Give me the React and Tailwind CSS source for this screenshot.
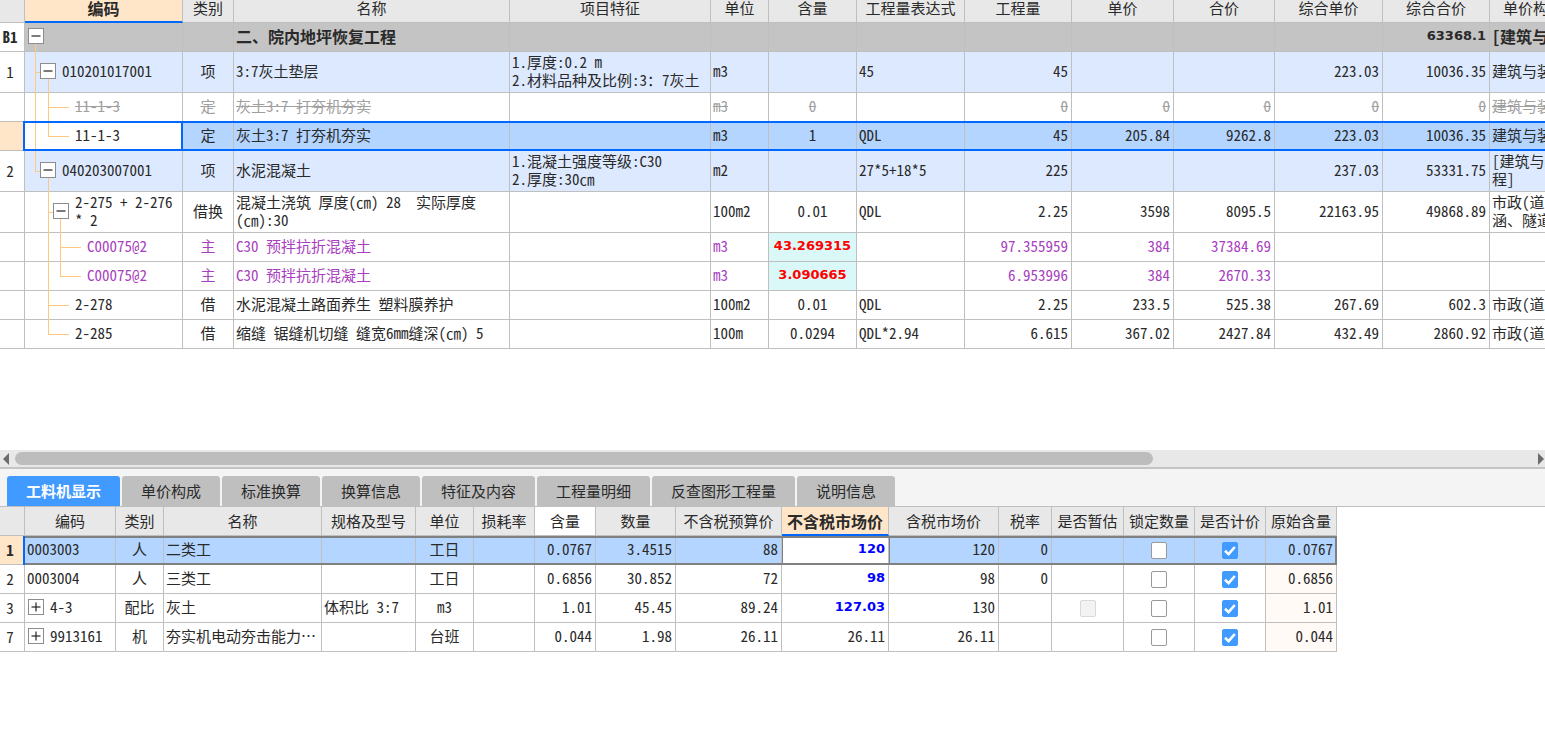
import React, { useState } from 'react';
import clsx from 'clsx';

const FONT =
  "font-['Noto_Sans_Mono_CJK_SC','Noto_Sans_CJK_SC',sans-serif] text-[15px] leading-[18px] text-[#2a2a2a]";

const BOLD_NUMBER = "font-['DejaVu_Sans','Noto_Sans_CJK_SC',sans-serif] text-[13px] font-bold";

const billColumns = [
  { key: 'type', label: '类别', width: 'w-[51px]', align: 'text-center' },
  { key: 'name', label: '名称', width: 'w-[276px]', align: 'text-left' },
  { key: 'feature', label: '项目特征', width: 'w-[201px]', align: 'text-left' },
  { key: 'unit', label: '单位', width: 'w-[58px]', align: 'text-left' },
  { key: 'content', label: '含量', width: 'w-[88px]', align: 'text-center' },
  { key: 'expr', label: '工程量表达式', width: 'w-[108px]', align: 'text-left' },
  { key: 'qty', label: '工程量', width: 'w-[107px]', align: 'text-right' },
  { key: 'price', label: '单价', width: 'w-[102px]', align: 'text-right' },
  { key: 'total', label: '合价', width: 'w-[101px]', align: 'text-right' },
  { key: 'unitAll', label: '综合单价', width: 'w-[108px]', align: 'text-right' },
  { key: 'totalAll', label: '综合合价', width: 'w-[107px]', align: 'text-right' },
  { key: 'file', label: '单价构成文件', width: 'w-[117px]', align: 'text-left' },
];

// guides: [level, 'full' | 'top' | 'bottom'], branch: [level, end x]
const billRows = [
  {
    no: 'B1', kind: 'section', depth: 0, open: true, code: '',
    guides: [[0, 'bottom']],
    name: '二、院内地坪恢复工程', totalAll: '63368.1', file: '[建筑与装饰工程]',
  },
  {
    no: '1', kind: 'item', depth: 1, open: true, code: '010201017001',
    guides: [[0, 'full'], [1, 'bottom']], branch: [0, 15],
    type: '项', name: '3:7灰土垫层', feature: '1.厚度:0.2 m\n2.材料品种及比例:3：7灰土', unit: 'm3',
    expr: '45', qty: '45', unitAll: '223.03', totalAll: '10036.35', file: '建筑与装饰工程',
  },
  {
    kind: 'deleted', depth: 2, code: '11-1-3',
    guides: [[0, 'full'], [1, 'full']], branch: [1, 44],
    type: '定', name: '灰土3:7 打夯机夯实', unit: 'm3', content: '0', qty: '0', price: '0', total: '0',
    unitAll: '0', totalAll: '0', file: '建筑与装饰工程',
  },
  {
    kind: 'selected', depth: 2, code: '11-1-3',
    guides: [[0, 'full'], [1, 'top']], branch: [1, 44],
    type: '定', name: '灰土3:7 打夯机夯实', unit: 'm3', content: '1', expr: 'QDL', qty: '45', price: '205.84',
    total: '9262.8', unitAll: '223.03', totalAll: '10036.35', file: '建筑与装饰工程',
  },
  {
    no: '2', kind: 'item', depth: 1, open: true, code: '040203007001',
    guides: [[0, 'top'], [1, 'bottom']], branch: [0, 15],
    type: '项', name: '水泥混凝土', feature: '1.混凝土强度等级:C30\n2.厚度:30㎝', unit: 'm2',
    expr: '27*5+18*5', qty: '225', unitAll: '237.03', totalAll: '53331.75', file: '[建筑与装饰工\n程]',
  },
  {
    kind: 'tall', depth: 2, open: true, code: '2-275 + 2-276 * 2',
    guides: [[1, 'full'], [2, 'bottom']], branch: [1, 28],
    type: '借换', name: '混凝土浇筑 厚度(㎝) 28  实际厚度\n(㎝):30', unit: '100m2', content: '0.01',
    expr: 'QDL', qty: '2.25', price: '3598', total: '8095.5', unitAll: '22163.95', totalAll: '49868.89',
    file: '市政(道路、桥\n涵、隧道)',
  },
  {
    kind: 'material', depth: 3, code: 'C00075@2',
    guides: [[1, 'full'], [2, 'full']], branch: [2, 56],
    type: '主', name: 'C30 预拌抗折混凝土', unit: 'm3', content: '43.269315', qty: '97.355959', price: '384',
    total: '37384.69',
  },
  {
    kind: 'material', depth: 3, code: 'C00075@2',
    guides: [[1, 'full'], [2, 'top']], branch: [2, 56],
    type: '主', name: 'C30 预拌抗折混凝土', unit: 'm3', content: '3.090665', qty: '6.953996', price: '384',
    total: '2670.33',
  },
  {
    kind: 'plain', depth: 2, code: '2-278',
    guides: [[1, 'full']], branch: [1, 44],
    type: '借', name: '水泥混凝土路面养生 塑料膜养护', unit: '100m2', content: '0.01', expr: 'QDL', qty: '2.25',
    price: '233.5', total: '525.38', unitAll: '267.69', totalAll: '602.3', file: '市政(道路、桥',
  },
  {
    kind: 'plain', depth: 2, code: '2-285',
    guides: [[1, 'top']], branch: [1, 44],
    type: '借', name: '缩缝 锯缝机切缝 缝宽6mm缝深(㎝) 5', unit: '100m', content: '0.0294', expr: 'QDL*2.94',
    qty: '6.615', price: '367.02', total: '2427.84', unitAll: '432.49', totalAll: '2860.92', file: '市政(道路、桥',
  },
];

const rowStyles = {
  section: 'h-[29px] bg-[#c4c4c4] font-bold',
  item: 'h-[41px] bg-[#dde9fe]',
  deleted: 'h-[29px] bg-white text-[#a0a0a0] line-through',
  selected: 'h-[29px] bg-[#b3d5ff]',
  tall: 'h-[41px] bg-white',
  material: 'h-[29px] bg-white text-[#a93fc0]',
  plain: 'h-[29px] bg-white',
};

const indents = ['pl-[3px]', 'pl-[15px]', 'pl-[28px]', 'pl-[40px]'];
const guideX = [10, 23, 35];

const tabs = ['工料机显示', '单价构成', '标准换算', '换算信息', '特征及内容', '工程量明细', '反查图形工程量', '说明信息'];

const resourceColumns = [
  { key: 'code', label: '编码', width: 'w-[91px]', align: 'text-left' },
  { key: 'type', label: '类别', width: 'w-[48px]', align: 'text-center' },
  { key: 'name', label: '名称', width: 'w-[158px]', align: 'text-left' },
  { key: 'spec', label: '规格及型号', width: 'w-[94px]', align: 'text-left' },
  { key: 'unit', label: '单位', width: 'w-[58px]', align: 'text-center' },
  { key: 'loss', label: '损耗率', width: 'w-[61px]', align: 'text-right' },
  { key: 'content', label: '含量', width: 'w-[61px]', align: 'text-right' },
  { key: 'qty', label: '数量', width: 'w-[80px]', align: 'text-right' },
  { key: 'budget', label: '不含税预算价', width: 'w-[106px]', align: 'text-right' },
  { key: 'market', label: '不含税市场价', width: 'w-[107px]', align: 'text-right' },
  { key: 'taxed', label: '含税市场价', width: 'w-[110px]', align: 'text-right' },
  { key: 'rate', label: '税率', width: 'w-[53px]', align: 'text-right' },
  { key: 'estimated', label: '是否暂估', width: 'w-[72px]', align: 'text-center' },
  { key: 'locked', label: '锁定数量', width: 'w-[71px]', align: 'text-center' },
  { key: 'priced', label: '是否计价', width: 'w-[71px]', align: 'text-center' },
  { key: 'origin', label: '原始含量', width: 'w-[71px]', align: 'text-right' },
];

const resourceRows = [
  { no: '1', code: '0003003', type: '人', name: '二类工', unit: '工日', content: '0.0767', qty: '3.4515', budget: '88', market: '120', changed: true, taxed: '120', rate: '0', locked: false, priced: true, origin: '0.0767' },
  { no: '2', code: '0003004', type: '人', name: '三类工', unit: '工日', content: '0.6856', qty: '30.852', budget: '72', market: '98', changed: true, taxed: '98', rate: '0', locked: false, priced: true, origin: '0.6856' },
  { no: '3', code: '4-3', group: true, type: '配比', name: '灰土', spec: '体积比 3:7', unit: 'm3', content: '1.01', qty: '45.45', budget: '89.24', market: '127.03', changed: true, taxed: '130', estimated: false, locked: false, priced: true, origin: '1.01' },
  { no: '7', code: '9913161', group: true, type: '机', name: '夯实机电动夯击能力…', unit: '台班', content: '0.044', qty: '1.98', budget: '26.11', market: '26.11', taxed: '26.11', locked: false, priced: true, origin: '0.044' },
];

const ToggleBox = ({ open, onClick }) => (
  <button
    onClick={onClick}
    aria-label={open ? '收起' : '展开'}
    className="relative flex h-4 w-4 shrink-0 items-center justify-center border border-[#8c8c8c] bg-white text-[#222]"
  >
    <svg className="h-[10px] w-[10px]" viewBox="0 0 10 10" stroke="currentColor" strokeWidth="1.2">
      <path d="M0.5 5h9" />
      {!open && <path d="M5 0.5v9" />}
    </svg>
  </button>
);

const TreeGuides = ({ guides, branch }) => (
  <svg className="absolute left-0 top-0 h-[calc(100%+1px)] w-full" stroke="#ffc880" strokeWidth="1">
    {guides.map(([level, span]) => (
      <line
        key={level}
        x1={guideX[level] + 0.5}
        x2={guideX[level] + 0.5}
        y1={span === 'bottom' ? '50%' : '0'}
        y2={span === 'top' ? '50%' : '100%'}
      />
    ))}
    {branch && <line x1={guideX[branch[0]]} x2={branch[1]} y1="50%" y2="50%" />}
  </svg>
);

const Check = ({ label, value, disabled }) => {
  const [checked, setChecked] = useState(value);
  return (
    <label className="relative inline-block h-[17px] w-4 align-middle">
      <input
        type="checkbox"
        aria-label={label}
        checked={checked}
        disabled={disabled}
        onChange={() => setChecked(!checked)}
        className="block h-[17px] w-4 appearance-none rounded-[2px] border border-[#999] bg-white checked:border-[#409aff] checked:bg-[#409aff] disabled:border-[#d9d9d9] disabled:bg-[#f3f3f3]"
      />
      {checked && (
        <svg className="pointer-events-none absolute inset-0 h-[17px] w-4" viewBox="0 0 16 17" fill="none" stroke="white" strokeWidth="2.6">
          <path d="M3 8.8L6.6 12.2L12.8 5" />
        </svg>
      )}
    </label>
  );
};

const BillTable = () => (
  <table className="w-[1607px] table-fixed border-separate border-spacing-0 whitespace-pre-wrap">
    <thead>
      <tr className="h-[23px] bg-[#e8e8e8] align-top leading-4">
        <th className="w-[25px] border-b border-r border-[#bfbfbf]" />
        <th className="w-[158px] border-b-2 border-r border-b-[#0067ff] border-r-[#bfbfbf] bg-[#ffe6c8] text-base font-bold leading-4">
          编码
        </th>
        {billColumns.map((col) => (
          <th key={col.key} className={clsx('border-b border-r border-[#bfbfbf] font-normal', col.width)}>
            {col.label}
          </th>
        ))}
      </tr>
    </thead>
    <tbody>
      {billRows.map((row, i) => {
        const selected = row.kind === 'selected';
        return (
          <tr key={i} className={clsx('relative', rowStyles[row.kind])}>
            <td
              className={clsx(
                'border-b border-r border-[#bfbfbf] pr-1 text-center text-[#2a2a2a]',
                selected ? 'bg-[#ffe6c8]' : 'bg-white'
              )}
            >
              {row.no}
              {selected && (
                <span className="pointer-events-none absolute -top-px bottom-0 left-[23px] right-0 z-10 border-2 border-[#0067ff]" />
              )}
            </td>
            <td className={clsx('relative border-b border-r border-[#bfbfbf] pb-[2px]', selected && 'bg-white', indents[row.depth])}>
              <TreeGuides guides={row.guides} branch={row.branch} />
              <div className="relative flex items-center">
                {row.open ? <ToggleBox open /> : <span className="w-4 shrink-0" />}
                <span className="ml-[6px]">{row.code}</span>
              </div>
              {selected && (
                <span className="pointer-events-none absolute -right-px bottom-0 top-0 border-r-2 border-[#0067ff]" />
              )}
            </td>
            {billColumns.map((col) => (
              <td
                key={col.key}
                className={clsx(
                  'border-b border-r border-[#bfbfbf] pb-[2px]',
                  col.align,
                  col.align === 'text-left' && 'pl-[2px]',
                  col.align === 'text-right' && 'pr-[3px]',
                  row.kind === 'section' && (col.key === 'totalAll' ? BOLD_NUMBER : 'whitespace-nowrap text-base leading-[18px]'),
                  row.kind === 'material' && col.key === 'content' && ['bg-[#dbf8f8] text-[#ff0000]', BOLD_NUMBER]
                )}
              >
                {row[col.key]}
              </td>
            ))}
          </tr>
        );
      })}
    </tbody>
  </table>
);

const ResourceTable = () => {
  const renderCell = (row, col) => {
    const value = row[col.key];
    if (typeof value === 'boolean') {
      return <Check label={col.label} value={value} disabled={col.key === 'estimated'} />;
    }
    if (col.key === 'code' && row.group) {
      return (
        <div className="flex items-center pl-px">
          <ToggleBox />
          <span className="ml-[6px]">{value}</span>
        </div>
      );
    }
    return value;
  };

  return (
    <table className="w-[1337px] table-fixed border-separate border-spacing-0 whitespace-nowrap">
      <thead>
        <tr className="h-[29px] bg-[#e8e8e8]">
          <th className="w-[25px] border-b border-r border-[#bfbfbf]" />
          {resourceColumns.map((col) => (
            <th
              key={col.key}
              className={clsx(
                'border-r border-r-[#bfbfbf]',
                col.width,
                col.key === 'market'
                  ? 'border-b-2 border-b-[#0067ff] bg-[#ffe6c8] text-base font-bold leading-[18px]'
                  : 'border-b border-b-[#bfbfbf] font-normal',
                col.key === 'content' && 'bg-white'
              )}
            >
              {col.label}
            </th>
          ))}
        </tr>
      </thead>
      <tbody>
        {resourceRows.map((row, i) => (
          <tr key={row.no} className={clsx('relative h-[29px]', i === 0 ? 'bg-[#b3d5ff]' : 'bg-white')}>
            <td
              className={clsx(
                'border-b border-r border-[#bfbfbf] pr-1 text-center',
                i === 0 ? 'bg-[#ffe6c8] font-bold' : 'bg-white'
              )}
            >
              {row.no}
              {i === 0 && (
                <>
                  <span className="pointer-events-none absolute bottom-0 left-[25px] right-0 top-0 z-10 border-y-2 border-r-2 border-[#808080]" />
                  <span className="pointer-events-none absolute bottom-0 left-[23px] top-0 z-10 border-r-2 border-[#0067ff]" />
                </>
              )}
            </td>
            {resourceColumns.map((col) => (
              <td
                key={col.key}
                className={clsx(
                  'border-b border-r border-[#bfbfbf] pb-[2px]',
                  col.align,
                  col.align === 'text-left' && 'pl-[2px]',
                  col.align === 'text-right' && 'pr-[3px]',
                  col.key === 'market' && row.changed && ['text-[#0000ff]', BOLD_NUMBER],
                  col.key === 'market' && i === 0 && 'bg-white shadow-[inset_1px_0_#808080,1px_0_#808080]',
                  col.key === 'origin' && i > 0 && 'bg-[#fffaf5]'
                )}
              >
                {renderCell(row, col)}
              </td>
            ))}
          </tr>
        ))}
      </tbody>
    </table>
  );
};

const ScrollBar = () => (
  <div className="flex h-[17px] items-center gap-[6px] bg-[#e8e8e8] pl-[3px] pr-px">
    <button aria-label="向左滚动">
      <svg className="h-[12px] w-[6px]" viewBox="0 0 6 12" fill="#6b6b6b">
        <path d="M6 0v12L0 6z" />
      </svg>
    </button>
    <div className="flex-1">
      <div className="h-[13px] w-[75%] rounded-full bg-[#bdbdbd]" />
    </div>
    <button aria-label="向右滚动">
      <svg className="h-[12px] w-[6px]" viewBox="0 0 6 12" fill="#6b6b6b">
        <path d="M0 0v12L6 6z" />
      </svg>
    </button>
  </div>
);

const App = () => {
  const [activeTab, setActiveTab] = useState(tabs[0]);

  return (
    <div lang="zh-CN" className={clsx('flex min-h-screen flex-col overflow-hidden bg-white', FONT)}>
      {/* Bill of quantities */}
      <section className="h-[450px] shrink-0 overflow-hidden">
        <BillTable />
      </section>
      <ScrollBar />

      {/* Detail tabs */}
      <nav
        role="tablist"
        className="flex items-end gap-[2px] border-b border-t-2 border-b-[#bfbfbf] border-t-[#c4c4c4] bg-[#f4f4f4] pl-[7px] pt-[7px]"
      >
        {tabs.map((tab) => (
          <button
            key={tab}
            role="tab"
            aria-selected={tab === activeTab}
            onClick={() => setActiveTab(tab)}
            className={clsx(
              'h-[30px] rounded-t-[3px] px-[19px]',
              tab === activeTab ? 'bg-[#409aff] font-bold text-white' : 'bg-[#bfbfbf]'
            )}
          >
            {tab}
          </button>
        ))}
      </nav>

      {/* Labour, material and machinery */}
      <section className="overflow-hidden">
        <ResourceTable />
      </section>
    </div>
  );
};

export default App;
